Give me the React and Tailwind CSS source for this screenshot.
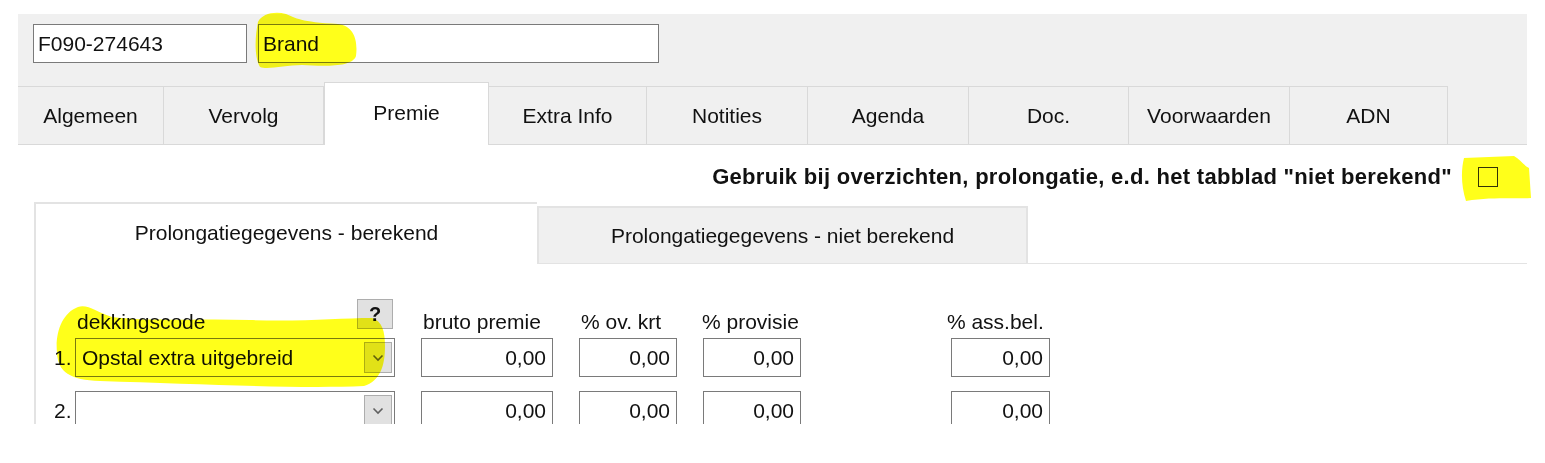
import React from "react";

const tabs = [
  { label: "Algemeen", w: "w-[146px]" },
  { label: "Vervolg", w: "w-[160px]" },
  { label: "Premie", w: "w-[165px]", active: true },
  { label: "Extra Info", w: "w-[158px]" },
  { label: "Notities", w: "w-[161px]" },
  { label: "Agenda", w: "w-[161px]" },
  { label: "Doc.", w: "w-[160px]" },
  { label: "Voorwaarden", w: "w-[161px]" },
  { label: "ADN", w: "w-[158px]" },
];

const Chevron = () => (
  <svg width="12" height="8" viewBox="0 0 12 8" fill="none">
    <path d="M1.5 1.5 L6 6 L10.5 1.5" stroke="#606060" strokeWidth="1.6" />
  </svg>
);

const Combo = ({ value }) => (
  <div className="flex h-[39px] w-[320px] items-center justify-between border border-[#7a7a7a] bg-white pl-[6px] pr-[2px]">
    <span className="whitespace-nowrap">{value}</span>
    <div className="flex h-[31px] w-[28px] items-center justify-center border border-[#adadad] bg-[#e1e1e1]">
      <Chevron />
    </div>
  </div>
);

const Num = ({ w }) => (
  <div
    className={`flex h-[39px] items-center justify-end border border-[#7a7a7a] bg-white pr-[6px] ${w}`}
  >
    0,00
  </div>
);

const Row = ({ n, value }) => (
  <div className="flex items-center">
    <span className="w-[23px] pl-[2px]">{n}</span>
    <Combo value={value} />
    <div className="ml-[26px]">
      <Num w="w-[132px]" />
    </div>
    <div className="ml-[26px]">
      <Num w="w-[98px]" />
    </div>
    <div className="ml-[26px]">
      <Num w="w-[98px]" />
    </div>
    <div className="ml-[150px]">
      <Num w="w-[99px]" />
    </div>
  </div>
);

export default function App() {
  return (
    <div className="relative h-[463px] w-[1545px] overflow-hidden bg-white font-['Liberation_Sans',Arial,sans-serif] text-[21px] leading-none text-[#111]">
      <div className="h-[424px] overflow-hidden pt-[14px]">
        {/* top gray header with inputs and tabs */}
        <div className="ml-[18px] w-[1509px] bg-[#f0f0f0]">
          <div className="flex gap-[11px] pl-[15px] pt-[10px]">
            <div className="flex h-[39px] w-[214px] items-center border border-[#7a7a7a] bg-white pl-[4px]">
              F090-274643
            </div>
            <div className="flex h-[39px] w-[401px] items-center border border-[#7a7a7a] bg-white pl-[4px]">
              Brand
            </div>
          </div>
          <div className="mt-[20px] flex h-[62px] items-end border-b border-[#d9d9d9]">
            {tabs.map((t) =>
              t.active ? (
                <div
                  key={t.label}
                  className={`-mb-px flex h-[63px] items-center justify-center border-x border-t border-[#d9d9d9] bg-white pb-[4px] ${t.w}`}
                >
                  {t.label}
                </div>
              ) : (
                <div
                  key={t.label}
                  className={`flex h-[58px] items-center justify-center border-r border-t border-[#d9d9d9] ${t.w}`}
                >
                  {t.label}
                </div>
              )
            )}
          </div>
        </div>

        {/* checkbox option */}
        <div className="mr-[47px] mt-[21px] flex items-center justify-end">
          <span className="text-[22px] font-bold tracking-[0.3px]">
            Gebruik bij overzichten, prolongatie, e.d. het tabblad "niet berekend"
          </span>
          <div className="ml-[26px] h-[20px] w-[20px] border border-[#333] bg-white" />
        </div>

        {/* inner tabs */}
        <div className="ml-[34px] mt-[14px] w-[1493px]">
          <div className="flex items-end border-b border-[#e3e3e3]">
            <div className="-mb-px flex h-[62px] w-[503px] items-center justify-center border-l-2 border-t-2 border-[#e3e3e3] bg-white pb-[4px]">
              Prolongatiegegevens - berekend
            </div>
            <div className="flex h-[57px] w-[491px] items-center justify-center border-x-2 border-t-2 border-[#e3e3e3] bg-[#f0f0f0]">
              Prolongatiegegevens - niet berekend
            </div>
          </div>

          <div className="h-[200px] border-l-2 border-[#e3e3e3] pl-[16px] pt-[47px]">
            <div className="flex items-end">
              <div className="relative w-[343px] pl-[25px]">
                <span>dekkingscode</span>
                <div className="absolute bottom-[3px] left-[305px] flex h-[30px] w-[36px] items-center justify-center border border-[#adadad] bg-[#e1e1e1] text-[20px] font-bold">
                  ?
                </div>
              </div>
              <span className="ml-[28px] w-[158px]">bruto premie</span>
              <span className="w-[121px]">% ov. krt</span>
              <span>% provisie</span>
              <span className="ml-[148px]">% ass.bel.</span>
            </div>
            <div className="mt-[6px] flex flex-col gap-[14px]">
              <Row n="1." value="Opstal extra uitgebreid" />
              <Row n="2." value="" />
            </div>
          </div>
        </div>
      </div>

      {/* yellow marker strokes */}
      <svg
        className="pointer-events-none absolute inset-0 mix-blend-multiply"
        width="1545"
        height="463"
        viewBox="0 0 1545 463"
      >
        <g fill="#ffff1a">
          <path d="M258,22 C262,14 274,11 286,14 C296,18 300,22 338,24 C354,26 358,40 356,56 C352,68 322,66 302,65 C285,65 268,70 260,67 C254,57 255,36 258,22 Z" />
          <path d="M1464,158 L1514,156 C1520,159 1523,165 1529,168 L1531,198 C1510,199 1490,197 1466,201 C1461,186 1461,170 1464,158 Z" />
          <path d="M78,307 C62,313 55,333 57,353 C58,372 70,380 100,381 C200,384 300,389 364,386 C380,381 385,366 385,346 C385,331 382,321 372,318 C340,318 300,322 250,320 C200,318 150,322 112,317 C96,312 88,304 78,307 Z" />
        </g>
      </svg>
    </div>
  );
}
